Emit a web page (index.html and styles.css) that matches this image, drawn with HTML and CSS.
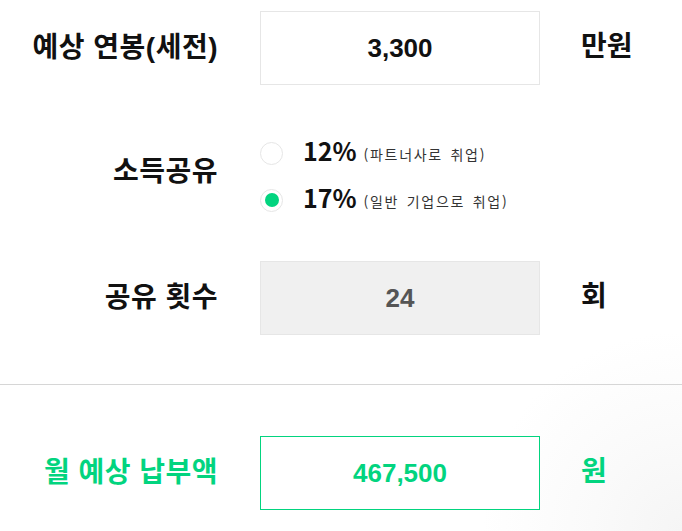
FILE: index.html
```html
<!DOCTYPE html>
<html lang="ko">
<head>
<meta charset="utf-8">
<link rel="stylesheet" href="styles.css">
</head>
<body>
<div class="calc">
  <section class="inputs">
    <div class="row">
      <div class="label">예상 연봉(세전)</div>
      <div class="box">3,300</div>
      <div class="unit">만원</div>
    </div>
    <div class="row row-radio">
      <div class="label">소득공유</div>
      <div class="radios">
        <div class="radio">
          <span class="circle"></span>
          <span class="pct">12%</span>
          <span class="note">(파트너사로 취업)</span>
        </div>
        <div class="radio">
          <span class="circle checked"></span>
          <span class="pct">17%</span>
          <span class="note">(일반 기업으로 취업)</span>
        </div>
      </div>
    </div>
    <div class="row">
      <div class="label">공유 횟수</div>
      <div class="box box-disabled">24</div>
      <div class="unit">회</div>
    </div>
  </section>
  <section class="result">
    <div class="row">
      <div class="label label-green">월 예상 납부액</div>
      <div class="box box-green">467,500</div>
      <div class="unit unit-green">원</div>
    </div>
  </section>
</div>
</body>
</html>
```

FILE: styles.css
```css
html, body {
  margin: 0;
  padding: 0;
}
body {
  width: 682px;
  height: 531px;
  overflow: hidden;
  background: #fff;
  background-image: radial-gradient(circle at 100% 100%, #f5f5f5 0, #fafafa 90px, #ffffff 200px);
  font-family: "Liberation Sans", "Noto Sans CJK KR", sans-serif;
  color: #111;
}
.inputs {
  padding-top: 11px;
  padding-bottom: 49px;
  border-bottom: 1px solid #d6d6d6;
  display: flex;
  flex-direction: column;
  gap: 20px;
}
.result {
  padding-top: 51px;
}
.row {
  display: grid;
  grid-template-columns: 220px 280px auto;
  column-gap: 40px;
  align-items: center;
}
.label {
  text-align: right;
  font-size: 28px;
  line-height: 1;
  font-weight: 700;
  letter-spacing: 0.5px;
  margin-top: 0;
  margin-right: 2px;
}
.box {
  height: 72px;
  border: 1px solid #e6e6e6;
  background: #fff;
  display: flex;
  align-items: center;
  justify-content: center;
  font-size: 26px;
  font-weight: 700;
  color: #111;
}
.box-disabled {
  background: #f0f0f0;
  color: #555;
}
.box-green {
  border-color: #02d47f;
  color: #02d47f;
}
.unit {
  font-size: 28px;
  line-height: 1;
  font-weight: 700;
  margin-left: 1px;
  margin-top: -2px;
}
.label-green, .unit-green {
  color: #02d47f;
}
.row-radio {
  height: 136px;
}
.row-radio .label {
  margin-top: -2px;
}
.radios {
  display: flex;
  flex-direction: column;
  gap: 21px;
  margin-top: 7px;
  grid-column: 2 / 4;
}
.radio {
  display: flex;
  align-items: center;
  height: 26px;
}
.circle {
  width: 23px;
  height: 23px;
  border: 1px solid #e6e6e6;
  border-radius: 50%;
  box-sizing: border-box;
  margin-right: 20px;
  display: flex;
  align-items: center;
  justify-content: center;
  flex: none;
}
.circle.checked::after {
  content: "";
  width: 14px;
  height: 14px;
  border-radius: 50%;
  background: #02d47f;
}
.pct {
  font-family: "Noto Sans CJK KR", sans-serif;
  font-size: 25px;
  line-height: 1;
  font-weight: 700;
  color: #111;
  margin-right: 7px;
  margin-top: -6px;
}
.note {
  font-family: "Noto Sans CJK KR", sans-serif;
  font-size: 14px;
  line-height: 1;
  letter-spacing: 1.7px;
  word-spacing: 2px;
  color: #333;
  margin-top: 2px;
}
```
